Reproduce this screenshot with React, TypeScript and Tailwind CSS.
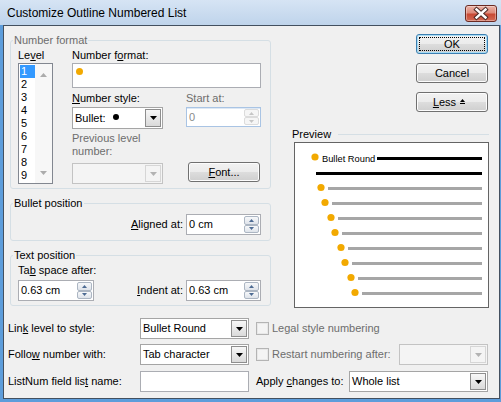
import React from 'react';

type Kids = { children?: React.ReactNode };
type Cls = { className?: string };

function U({ children }: Kids) {
  return <span className="underline decoration-1 underline-offset-1">{children}</span>;
}

function ArrowDown({ color }: { color: string }) {
  return (
    <svg width="7" height="4" viewBox="0 0 7 4" className="block">
      <path d="M0 0H7L3.5 4Z" fill={color} />
    </svg>
  );
}

function ArrowUp({ color }: { color: string }) {
  return (
    <svg width="7" height="4" viewBox="0 0 7 4" className="block">
      <path d="M0 4H7L3.5 0Z" fill={color} />
    </svg>
  );
}

function Combo({ children, className = '', disabled = false }: Kids & Cls & { disabled?: boolean }) {
  return (
    <div className={`flex border ${disabled ? 'border-[#c3c3c3] bg-[#f4f4f4]' : 'border-[#a5a5a5] bg-white'} ${className}`}>
      <div className="flex flex-1 items-center overflow-hidden whitespace-nowrap pl-[2px]">{children}</div>
      <div
        className={`m-px flex w-[16px] items-center justify-center border ${
          disabled ? 'border-[#d6d6d6] bg-[#f4f4f4]' : 'border-[#8e8e8e] bg-[linear-gradient(to_bottom,#f7f7f7,#dadada)]'
        }`}
      >
        <ArrowDown color={disabled ? '#b3b3b3' : '#000000'} />
      </div>
    </div>
  );
}

function SpinBtn({ up = false, disabled = false }: { up?: boolean; disabled?: boolean }) {
  return (
    <div
      className={`flex flex-1 items-center justify-center rounded-[2px] border ${
        disabled ? 'border-[#dcdcdc] bg-[#f6f6f6]' : 'border-[#acb6c3] bg-[linear-gradient(to_bottom,#f7f8fa,#dee3ea)]'
      }`}
    >
      <svg width="5" height="3" viewBox="0 0 5 3" className="block">
        <path d={up ? 'M0 3H5L2.5 0Z' : 'M0 0H5L2.5 3Z'} fill={disabled ? '#c6c6c6' : '#4d6b93'} />
      </svg>
    </div>
  );
}

function Spin({ value, className = '', disabled = false }: Cls & { value: string; disabled?: boolean }) {
  return (
    <div
      className={`flex border ${
        disabled
          ? 'border-[#a9c4e4] bg-white text-[#8a8a8a] shadow-[inset_0_1px_0_#dde8f5]'
          : 'border-[#abadb3] bg-white'
      } ${className}`}
    >
      <div className="flex flex-1 items-center pl-[2px] whitespace-nowrap">{value}</div>
      <div className="my-px mr-px flex w-[15px] flex-col">
        <SpinBtn up disabled={disabled} />
        <SpinBtn disabled={disabled} />
      </div>
    </div>
  );
}

function Btn({ children, className = '', isDefault = false }: Kids & Cls & { isDefault?: boolean }) {
  return (
    <div
      className={`flex h-[20px] items-center justify-center rounded-[3px] border bg-[linear-gradient(to_bottom,#f2f2f2_0%,#ebebeb_50%,#dddddd_50%,#cfcfcf_100%)] ${
        isDefault
          ? 'border-[#3c7fb1] shadow-[inset_0_0_0_1px_#a7dcf5] outline-1 outline-offset-[-4px] outline-dotted outline-black'
          : 'border-[#707070] shadow-[inset_0_0_0_1px_#fcfcfc]'
      } ${className}`}
    >
      {children}
    </div>
  );
}

function Check({ className = '' }: Cls) {
  return (
    <div className={`h-[13px] w-[13px] border border-[#b4b4b4] bg-[#f4f4f4] shadow-[inset_0_0_0_1px_#e8e8e8] ${className}`} />
  );
}

function CloseBtn() {
  return (
    <div className="mt-[5px] h-[17px] w-[32px] rounded-[3px] border border-[#6b2a22] bg-[linear-gradient(to_bottom,#ebb2a6_0%,#de8b7b_45%,#c84934_55%,#d26a55_100%)] shadow-[inset_0_0_0_1px_rgba(255,255,255,0.35)]">
      <svg width="30" height="15" viewBox="0 0 30 15" className="block">
        <path d="M10.5 3.5L19.5 11.5M19.5 3.5L10.5 11.5" stroke="#4a2a26" strokeWidth="4.4" strokeLinecap="square" />
        <path d="M10.5 3.5L19.5 11.5M19.5 3.5L10.5 11.5" stroke="#ffffff" strokeWidth="2.4" strokeLinecap="square" />
      </svg>
    </div>
  );
}

function LevelList() {
  const levels = [1, 2, 3, 4, 5, 6, 7, 8, 9];
  return (
    <div className="mt-px flex h-[121px] border border-[#828790] bg-white">
      <div className="flex w-[16px] flex-col py-px pl-px">
        {levels.map((n) => (
          <div key={n} className={`h-[13px] pl-px leading-[13px] ${n === 1 ? 'bg-[#3399ff] text-white' : ''}`}>
            {n}
          </div>
        ))}
      </div>
      <div className="flex w-[17px] flex-col items-center justify-between bg-[#f7f7f7] pt-[9px] pb-[8px]">
        <ArrowUp color="#acacac" />
        <ArrowDown color="#acacac" />
      </div>
    </div>
  );
}

function LessIcon() {
  return (
    <svg width="5" height="5" viewBox="0 0 5 5" className="mb-[2px] ml-[4px] block">
      <path d="M2.5 0L5 3H0Z" fill="#000" />
      <rect x="0" y="4" width="5" height="1" fill="#000" />
    </svg>
  );
}

function PreviewDrawing() {
  const xs = [33, 37, 43, 47, 53, 57, 63, 67];
  return (
    <svg width="193" height="164" viewBox="0 0 193 164" className="block">
      <circle cx="20" cy="14" r="3.6" fill="#f2a900" />
      <text x="27" y="19" fontSize="9.3" fontFamily="'Liberation Sans', Arial, sans-serif" fill="#000">
        Bullet Round
      </text>
      <rect x="82" y="14" width="105" height="3" fill="#000" />
      <rect x="21" y="29" width="166" height="3" fill="#000" />
      {xs.map((x, i) => (
        <g key={i}>
          <rect x={x} y={44 + 15 * i} width={187 - x} height="3" fill="#a6a6a6" />
          <circle cx={x - 7} cy={44.5 + 15 * i} r="3.6" fill="#f2a900" />
        </g>
      ))}
    </svg>
  );
}

export default function App() {
  return (
    <div className="flex h-[402px] w-[501px] flex-col overflow-hidden bg-[#5d9ddb] font-['Liberation_Sans',Arial,sans-serif] text-[11px] leading-[13px] text-black select-none">
      {/* Title bar */}
      <div className="flex h-[25px] items-start bg-[linear-gradient(to_bottom,#d6e4f4,#bfd4eb)] pr-[4px] pl-[7px]">
        <div className="mt-[6px] flex-1 text-[12px] leading-[15px]">Customize Outline Numbered List</div>
        <CloseBtn />
      </div>

      {/* Client area */}
      <div className="mr-px mb-[3px] ml-[3px] flex flex-1 flex-col border border-[#43505f] bg-[#f0f0f0] pt-[7px]">
        <div className="flex">
          {/* Left column */}
          <div className="ml-[6px] flex w-[261px] flex-col">
            <fieldset className="rounded-[3px] border border-[#d5dfe5]">
              <legend className="ml-[2px] px-px leading-[14px] text-[#6d6d6d]">Number format</legend>
              <div className="flex pt-[2px] pr-[9px] pb-[4px] pl-[7px]">
                <div className="flex w-[35px] flex-col">
                  <div>
                    Le<U>v</U>el
                  </div>
                  <LevelList />
                </div>
                <div className="ml-[19px] flex flex-1 flex-col">
                  <div>
                    Number f<U>o</U>rmat:
                  </div>
                  <div className="mt-px h-[25px] border border-[#abadb3] bg-white pt-[4px] pl-[3px]">
                    <div className="h-[7px] w-[7px] rounded-full bg-[#f2a900]" />
                  </div>
                  <div className="mt-[4px] flex">
                    <div className="flex w-[91px] flex-col">
                      <div>
                        <U>N</U>umber style:
                      </div>
                      <Combo className="mt-[2px] h-[22px]">
                        <span>Bullet:</span>
                        <span className="mb-[3px] ml-[7px] h-[6px] w-[6px] rounded-full bg-black" />
                      </Combo>
                    </div>
                    <div className="ml-[23px] flex flex-1 flex-col">
                      <div className="text-[#6d6d6d]">Start at:</div>
                      <Spin disabled value="0" className="mt-[2px] h-[20px]" />
                    </div>
                  </div>
                  <div className="mt-[3px] flex items-start">
                    <div className="flex w-[91px] flex-col">
                      <div className="text-[#6d6d6d]">
                        Previous level
                        <br />
                        number:
                      </div>
                      <Combo disabled className="mt-[5px] h-[21px]" />
                    </div>
                    <Btn className="mt-[30px] ml-[25px] w-[72px]">
                      <span>
                        <U>F</U>ont...
                      </span>
                    </Btn>
                  </div>
                </div>
              </div>
            </fieldset>

            <fieldset className="mt-[7px] rounded-[3px] border border-[#d5dfe5]">
              <legend className="ml-[2px] px-px leading-[14px]">Bullet position</legend>
              <div className="flex items-center justify-end pt-[4px] pr-[9px] pb-[5px] pl-[7px]">
                <span className="mr-[3px]">
                  <U>A</U>ligned at:
                </span>
                <Spin value="0 cm" className="h-[21px] w-[75px]" />
              </div>
            </fieldset>

            <fieldset className="mt-[7px] rounded-[3px] border border-[#d5dfe5]">
              <legend className="ml-[2px] px-px leading-[14px]">Text position</legend>
              <div className="flex items-end pt-[2px] pr-[9px] pb-[4px] pl-[7px]">
                <div className="flex flex-col">
                  <div>
                    Ta<U>b</U> space after:
                  </div>
                  <Spin value="0.63 cm" className="mt-[3px] h-[21px] w-[76px]" />
                </div>
                <div className="ml-auto flex items-center">
                  <span className="mr-[3px]">
                    <U>I</U>ndent at:
                  </span>
                  <Spin value="0.63 cm" className="h-[21px] w-[75px]" />
                </div>
              </div>
            </fieldset>
          </div>

          {/* Right column */}
          <div className="flex flex-1 flex-col pr-[10px]">
            <div className="mt-px mr-px flex flex-col items-end">
              <Btn isDefault className="w-[72px]">
                OK
              </Btn>
              <Btn className="mt-[9px] w-[72px]">Cancel</Btn>
              <Btn className="mt-[9px] w-[72px] pr-[6px]">
                <span>
                  <U>L</U>ess
                </span>
                <LessIcon />
              </Btn>
            </div>
            <div className="mt-[16px] ml-[21px] flex items-center">
              <span>Preview</span>
              <div className="ml-[7px] h-px flex-1 bg-[#d5dfe5]" />
            </div>
            <div className="mt-px ml-[23px] h-[166px] border border-[#646464] bg-white">
              <PreviewDrawing />
            </div>
          </div>
        </div>

        {/* Bottom rows */}
        <div className="mt-[10px] flex flex-col pr-[11px] pl-[4px]">
          <div className="flex items-center">
            <div className="w-[132px]">
              Lin<U>k</U> level to style:
            </div>
            <Combo className="h-[21px] w-[109px]">Bullet Round</Combo>
            <Check className="ml-[7px]" />
            <span className="ml-[3px] text-[#6d6d6d]">Legal style numbering</span>
          </div>
          <div className="mt-[5px] flex items-center">
            <div className="w-[132px]">
              Follo<U>w</U> number with:
            </div>
            <Combo className="h-[21px] w-[109px]">Tab character</Combo>
            <Check className="ml-[7px]" />
            <span className="ml-[3px] text-[#6d6d6d]">Restart numbering after:</span>
            <Combo disabled className="ml-auto h-[21px] w-[89px]" />
          </div>
          <div className="mt-[6px] flex items-center">
            <div className="w-[132px]">
              ListNum field lis<U>t</U> name:
            </div>
            <div className="h-[21px] w-[109px] border border-[#abadb3] bg-white" />
            <span className="ml-[7px]">
              Apply <U>c</U>hanges to:
            </span>
            <Combo className="ml-auto h-[21px] w-[139px]">Whole list</Combo>
          </div>
        </div>
      </div>
    </div>
  );
}
